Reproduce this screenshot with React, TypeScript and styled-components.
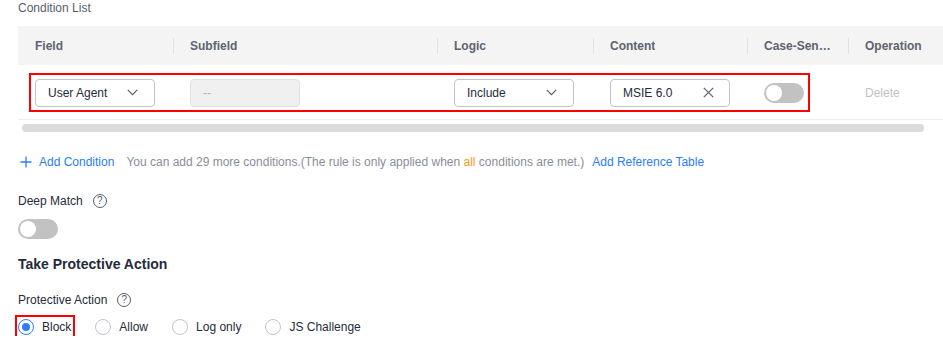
import React from "react";
import styled, { createGlobalStyle } from "styled-components";

const GlobalStyle = createGlobalStyle`
  body {
    margin: 0;
    background: #ffffff;
    font-family: "Liberation Sans", Arial, sans-serif;
    font-size: 12px;
    color: #252b3a;
  }
`;

const columns = [
  { key: "field", title: "Field", width: 155 },
  { key: "subfield", title: "Subfield", width: 264 },
  { key: "logic", title: "Logic", width: 156 },
  { key: "content", title: "Content", width: 154 },
  { key: "case", title: "Case-Sensitive", width: 101 },
  { key: "op", title: "Operation", width: 120 },
];

const gridTemplate = columns.map((c) => `${c.width}px`).join(" ");

function Chevron() {
  return (
    <svg width="11" height="7" viewBox="0 0 11 7" fill="none">
      <polyline
        points="0.8,0.8 5.5,5.6 10.2,0.8"
        stroke="#575d6c"
        strokeWidth="1.2"
      />
    </svg>
  );
}

function CloseIcon() {
  return (
    <svg width="11" height="11" viewBox="0 0 11 11" fill="none">
      <path d="M0.8 0.8 L10.2 10.2 M10.2 0.8 L0.8 10.2" stroke="#575d6c" strokeWidth="1.2" />
    </svg>
  );
}

function PlusIcon() {
  return (
    <svg width="12" height="12" viewBox="0 0 12 12" fill="none">
      <path d="M6 0.5 V11.5 M0.5 6 H11.5" stroke="#2b7cff" strokeWidth="1.3" />
    </svg>
  );
}

function App() {
  return (
    <>
      <GlobalStyle />
      <Page>
        <Label>Condition List</Label>
        <TableWrap>
          <HeaderRow>
            {columns.map((c, i) => (
              <HeaderCell key={c.key} $first={i === 0}>
                <span>{c.title}</span>
              </HeaderCell>
            ))}
          </HeaderRow>
          <BodyRow>
            <Highlight />
            <Cell>
              <Select>
                <span>User Agent</span>
                <Chevron />
              </Select>
            </Cell>
            <Cell>
              <DisabledInput>--</DisabledInput>
            </Cell>
            <Cell>
              <Select>
                <span>Include</span>
                <Chevron />
              </Select>
            </Cell>
            <Cell>
              <TextInput>
                <span>MSIE 6.0</span>
                <CloseIcon />
              </TextInput>
            </Cell>
            <Cell>
              <Toggle />
            </Cell>
            <Cell>
              <DeleteLink>Delete</DeleteLink>
            </Cell>
          </BodyRow>
        </TableWrap>
        <ScrollThumb />

        <AddRow>
          <LinkButton>
            <PlusIcon />
            Add Condition
          </LinkButton>
          <Hint>
            You can add 29 more conditions.(The rule is only applied when{" "}
            <Accent>all</Accent> conditions are met.)
          </Hint>
          <LinkButton>Add Reference Table</LinkButton>
        </AddRow>

        <FieldLabel $top={21}>
          Deep Match
          <Help>?</Help>
        </FieldLabel>
        <ToggleRow>
          <Toggle />
        </ToggleRow>

        <Heading>Take Protective Action</Heading>

        <FieldLabel $top={18}>
          Protective Action
          <Help>?</Help>
        </FieldLabel>
        <RadioGroup>
          <RadioItem $outlined>
            <RadioCircle $checked />
            Block
          </RadioItem>
          <RadioItem>
            <RadioCircle />
            Allow
          </RadioItem>
          <RadioItem>
            <RadioCircle />
            Log only
          </RadioItem>
          <RadioItem>
            <RadioCircle />
            JS Challenge
          </RadioItem>
        </RadioGroup>
      </Page>
    </>
  );
}

const Page = styled.div`
  padding-left: 18px;
  overflow: hidden;
  width: 925px;
`;

const Label = styled.div`
  line-height: 16px;
  color: #575d6c;
  margin-bottom: 10px;
`;

const TableWrap = styled.div`
  width: 925px;
  overflow: hidden;
`;

const HeaderRow = styled.div`
  display: grid;
  grid-template-columns: ${gridTemplate};
  height: 39px;
  background: #f4f4f4;
  width: max-content;
  min-width: 100%;
`;

const HeaderCell = styled.div<{ $first?: boolean }>`
  position: relative;
  display: flex;
  align-items: center;
  padding: 0 16px 0 17px;
  font-weight: bold;
  color: #5e6370;
  min-width: 0;

  span {
    overflow: hidden;
    white-space: nowrap;
    text-overflow: ellipsis;
  }

  &::before {
    content: "";
    display: ${(p) => (p.$first ? "none" : "block")};
    position: absolute;
    left: 0;
    top: 12px;
    height: 16px;
    width: 1px;
    background: #dfe1e6;
  }
`;

const BodyRow = styled.div`
  position: relative;
  display: grid;
  grid-template-columns: ${gridTemplate};
  height: 54px;
  border-bottom: 1px solid #eeeeee;
  width: max-content;
  min-width: 100%;
`;

const Highlight = styled.div`
  position: absolute;
  left: 11px;
  top: 8px;
  width: 777px;
  height: 35px;
  border: 2px solid #ff0000;
  pointer-events: none;
`;

const Cell = styled.div`
  display: flex;
  align-items: center;
  padding-left: 17px;
  padding-top: 1px;
`;

const Select = styled.div`
  box-sizing: border-box;
  width: 120px;
  height: 28px;
  border: 1px solid #c1c4cc;
  border-radius: 4px;
  display: flex;
  align-items: center;
  justify-content: space-between;
  padding: 0 16px 0 12px;
  color: #252b3a;
`;

const DisabledInput = styled.div`
  box-sizing: border-box;
  width: 110px;
  height: 28px;
  border: 1px solid #dfe1e6;
  border-radius: 4px;
  background: #f0f0f0;
  display: flex;
  align-items: center;
  padding-left: 12px;
  color: #adb0b8;
`;

const TextInput = styled(Select)`
  padding-right: 15px;
`;

const Toggle = styled.div`
  position: relative;
  width: 40px;
  height: 20px;
  border-radius: 10px;
  background: #c2c2c2;

  &::after {
    content: "";
    position: absolute;
    left: 2px;
    top: 2px;
    width: 16px;
    height: 16px;
    border-radius: 50%;
    background: #ffffff;
  }
`;

const DeleteLink = styled.span`
  color: #c0c2c7;
`;

const ScrollThumb = styled.div`
  margin: 4px 0 0 4px;
  width: 902px;
  height: 8px;
  border-radius: 4px;
  background: #dbdbdb;
`;

const AddRow = styled.div`
  display: flex;
  align-items: center;
  height: 20px;
  margin-top: 20px;
  white-space: nowrap;
`;

const LinkButton = styled.span`
  display: inline-flex;
  align-items: center;
  gap: 7px;
  color: #2b7cff;
  padding-left: 2px;
`;

const Hint = styled.span`
  color: #8a8e99;
  margin: 0 6px 0 12px;
`;

const Accent = styled.span`
  color: #f59a23;
`;

const FieldLabel = styled.div<{ $top: number }>`
  display: flex;
  align-items: center;
  gap: 10px;
  line-height: 16px;
  margin-top: ${(p) => p.$top}px;
  color: #252b3a;
`;

const Help = styled.span`
  box-sizing: border-box;
  width: 14px;
  height: 14px;
  border: 1px solid #575d6c;
  border-radius: 50%;
  display: inline-flex;
  align-items: center;
  justify-content: center;
  font-size: 10px;
  color: #575d6c;
`;

const ToggleRow = styled.div`
  margin-top: 10px;
`;

const Heading = styled.div`
  margin-top: 15px;
  line-height: 20px;
  font-size: 14px;
  font-weight: bold;
  color: #252b3a;
`;

const RadioGroup = styled.div`
  display: flex;
  align-items: center;
  gap: 24px;
  margin-top: 10px;
  height: 18px;
`;

const RadioItem = styled.label<{ $outlined?: boolean }>`
  position: relative;
  display: inline-flex;
  align-items: center;
  gap: 8px;
  color: #252b3a;

  &::after {
    content: "";
    display: ${(p) => (p.$outlined ? "block" : "none")};
    position: absolute;
    left: -3px;
    right: -4px;
    top: -4px;
    bottom: -4px;
    border: 2px solid #ff0000;
  }
`;

const RadioCircle = styled.span<{ $checked?: boolean }>`
  box-sizing: border-box;
  width: 16px;
  height: 16px;
  border-radius: 50%;
  border: 1px solid ${(p) => (p.$checked ? "#2b7cff" : "#c1c4cc")};
  display: inline-flex;
  align-items: center;
  justify-content: center;

  &::after {
    content: "";
    display: ${(p) => (p.$checked ? "block" : "none")};
    width: 8px;
    height: 8px;
    border-radius: 50%;
    background: #2b7cff;
  }
`;

export default App;
